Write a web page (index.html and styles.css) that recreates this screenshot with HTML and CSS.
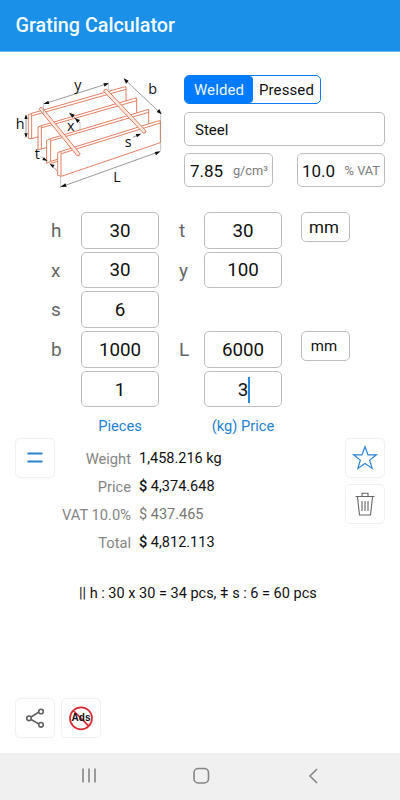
FILE: index.html
```
<!DOCTYPE html>
<html lang="en">
<head>
<meta charset="utf-8">
<meta name="viewport" content="width=device-width, initial-scale=1">
<title>Grating Calculator</title>
<link rel="stylesheet" href="styles.css">
</head>
<body>
<div class="app">
  <header class="bar">Grating Calculator</header>

  <section class="top">
    <svg class="diagram" viewBox="0 0 540 420">
      <g class="steel">
        <path d="M85 164l10-4L368 82l10-2v76L95 236l-10-1zM95 160v76M97 167L378 88"/>
        <path d="M114 201l10-4L400 116l10-2v74L124 267l-10 2zM124 197v70M126 203L410 122"/>
        <path d="M140 241l12-5L436 151l10-3v70L152 304l-12 6zM152 236v69M154 242L446 157M150 310l23-6"/>
        <path d="M173 278l10-4L470 184l11-2v66L184 349l-11-3zM183 274v74M184 281L481 189"/>
        <path class="rod" d="M118 148q1-8 9-5L240 281q-1 9-9 6z"/>
        <path class="rod" d="M311 94q1-8 9-6L438 213q0 8-8 6z"/>
      </g>
      <g class="dims">
        <path d="M78 167v63M134 131L323 71M374 58L482 160M185 380L478 275M211 161L240 189M398 232l22-9M122 290l20 12M149 312l22 20"/>
        <path class="guide" d="M130 130v35M325 72v18M482 160v112M182 350v34M240 187v25"/>
      </g>
      <g class="heads">
        <path d="M78 163l-5 14h10zM78 234l-5-14h10zM130 132l15-10 3 10zM327 69l-17 1 4 10zM371 55l15 7-8 9zM485 163l-15-7 8-9zM181 381l15-11 4 10zM482 274l-18 2 4 10zM207 158l17 6-7 9zM224 174l16 6-8 9zM424 221l-17 1 4 10zM142 303l-15-3 5-8zM149 311l15 4-6 8z"/>
      </g>
      <g class="names">
        <text x="223" y="91">y</text><text x="445" y="102">b</text>
        <text x="47" y="208">h</text><text x="201" y="213">x</text>
        <text x="374" y="260">s</text><text x="104" y="298">t</text>
        <text x="340" y="366">L</text>
      </g>
    </svg>
    <div class="setup">
      <div class="segments"><span class="on">Welded</span><span class="off">Pressed</span></div>
      <div class="box material">Steel</div>
      <div class="pair">
        <div class="box"><b>7.85</b><small>g/cm³</small></div>
        <div class="box vat"><b>10.0</b><small>% VAT</small></div>
      </div>
    </div>
  </section>

  <section class="fields">
    <label>h</label><div class="box">30</div><label class="second">t</label><div class="box">30</div><div class="box unit">mm</div>
    <label>x</label><div class="box">30</div><label class="second">y</label><div class="box">100</div><i></i>
    <label>s</label><div class="box">6</div><i></i><i></i><i></i>
    <label>b</label><div class="box">1000</div><label class="second">L</label><div class="box">6000</div><div class="box unit small">mm</div>
    <i></i><div class="box">1</div><i></i><div class="box">3<span class="caret"></span></div><i></i>
    <i></i><div class="caption">Pieces</div><i></i><div class="caption">(kg) Price</div><i></i>
  </section>

  <section class="results">
    <div class="tile"><svg viewBox="0 0 40 40"><path class="blue thick" d="M12.500 15.500h15M12.500 23.500h15"/></svg></div>
    <dl>
      <dt>Weight</dt><dd>1,458.216 kg</dd>
      <dt>Price</dt><dd><em>$</em> 4,374.648</dd>
      <dt>VAT 10.0%</dt><dd class="muted">$ 437.465</dd>
      <dt>Total</dt><dd><em>$</em> 4,812.113</dd>
    </dl>
    <div class="side">
      <div class="tile"><svg viewBox="0 0 40 40"><path class="blue" d="M20 8.800l3 8h8.400l-6.700 5.300 2.400 8.300L20 25.500l-7.100 4.900 2.400-8.300-6.700-5.300H17z"/></svg></div>
      <div class="tile"><svg viewBox="0 0 40 40"><path class="gray" d="M10.500 12.500h19M12.500 13l2 18h11l2-18M17 12V9.300h6V12M17 17v10M20 17v10M23 17v10"/></svg></div>
    </div>
  </section>

  <p class="summary">|| h : 30 x 30 = 34 pcs, ǂ s : 6 = 60 pcs</p>

  <section class="actions">
    <div class="tile"><svg viewBox="0 0 40 40"><path class="share" d="M16 19l8-5M16 21.500l8 4.500"/><g class="share"><circle cx="14" cy="20.300" r="2.300"/><circle cx="26" cy="13.500" r="2.300"/><circle cx="26" cy="26.800" r="2.300"/></g></svg></div>
    <div class="tile"><svg viewBox="0 0 40 40"><circle class="ban" cx="20" cy="20.300" r="11"/><path class="ban" d="M12.200 12.500l15.600 15.600"/><text class="ads" x="20" y="23">Ads</text></svg></div>
  </section>

  <nav class="nav">
    <svg viewBox="0 0 400 47"><path d="M83 15.500v14M89 15.500v14M95 15.500v14M317 16l-7 7 7 7"/><rect x="194" y="15.500" width="14.500" height="14.500" rx="4.200"/></svg>
  </nav>
</div>
</body>
</html>
```
FILE: styles.css
```
* { box-sizing: border-box; }
body { margin: 0; background: #fff; color: #111; font-family: Roboto, "Liberation Sans", sans-serif; }
.app { width: 400px; height: 800px; display: flex; flex-direction: column; overflow: hidden; }
svg { display: block; }

.bar { height: 52px; flex: none; padding-left: 15.500px; background: #1b90e8; border-bottom: 1px solid #71b9ef; color: #f2faff; font-size: 19.75px; font-weight: 500; line-height: 51px; }

.top { display: flex; height: 160px; flex: none; padding-top: 8px; }
.diagram { width: 180px; height: 140px; flex: none; }
.steel path { fill: #fff; stroke: #df7557; stroke-width: 2.8; stroke-linejoin: round; }
.steel .rod { fill: #fce8df; }
.dims path { fill: none; stroke: #555; stroke-width: 1.8; }
.dims .guide { stroke: #888; stroke-width: 1.5; }
.heads path { fill: #111; }
.names text { font-family: "Open Sans", "Noto Sans", sans-serif; font-size: 43px; fill: #111; }

.box { display: flex; align-items: center; justify-content: center; border: 1px solid #bdbdbd; border-radius: 5px; background: #fff; }
.setup { width: 201px; margin: 15px 0 0 4px; }
.segments { display: flex; width: 137px; height: 29px; border: 1px solid #0a7cf0; border-radius: 5px; overflow: hidden; font-size: 15px; line-height: 28px; text-align: center; letter-spacing: .1px; }
.segments .on { width: 68px; background: #007aff; color: #eaf6ff; border-radius: 0 4px 4px 0; }
.segments .off { flex: 1; }
.material { height: 34px; margin-top: 8px; padding-left: 10px; justify-content: flex-start; font-size: 15px; padding-top: 1px; }
.pair { display: flex; justify-content: space-between; margin-top: 7px; }
.pair .box { width: 89px; height: 34px; justify-content: space-between; padding: 1px 4px 0 5px; }
.pair .vat { width: 88px; padding-left: 4px; }
.pair b { font-weight: 400; font-size: 17px; }
.pair small { font-size: 12.8px; color: #7c7c7c; }

.fields { display: grid; grid-template-columns: 30px 78px 45px 78px 68px; grid-template-rows: repeat(5, 39.7px) 27px; padding-left: 51px; flex: none; }
.fields .box { height: 36.500px; font-size: 18.8px; padding-top: 1px; }
.fields label { font-size: 19px; line-height: 38px; color: #666; }
.fields .second { padding-left: 20px; }
.fields .unit { width: 49px; height: 30px; margin-left: 19px; padding-right: 3px; padding-bottom: 1px; font-size: 17px; }
.fields .small { font-size: 15px; }
.caret { width: 2px; height: 26px; margin-right: -2px; background: #2787d9; }
.caption { color: #2581d2; font-size: 14.7px; line-height: 32px; text-align: center; }

.tile { width: 40px; height: 40px; flex: none; border: 1px solid #f1f1f1; border-radius: 5px; }
.tile svg { width: 40px; height: 40px; margin: -1px; fill: none; }
.blue { stroke: #2884d4; stroke-width: 1.2; }
.thick { stroke-width: 1.9; }
.gray { stroke: #666; stroke-width: 1.1; }
.share { stroke: #626262; stroke-width: 1.6; }
.ban { stroke: #d62932; stroke-width: 1.7; }
.ads { fill: #111; font: 700 10px "Liberation Sans", sans-serif; text-anchor: middle; }

.results { display: flex; justify-content: space-between; height: 139px; flex: none; padding: 1px 15px 0; }
.results dl { display: grid; grid-template-columns: 76px 190px; column-gap: 8px; grid-auto-rows: 27.8px; width: 290px; margin: 7px 0 0; font-size: 14.5px; line-height: 28px; }
.results dt { color: #858585; text-align: right; white-space: nowrap; font-size: 14.7px; }
.results dd { margin: 0; }
.results em { font-style: normal; font-weight: 500; }
.results .muted { color: #777; }
.side { display: flex; flex-direction: column; gap: 6px; }
.summary { margin: 3px 0 0; height: 30px; padding-left: 79px; font-size: 14.5px; line-height: 30px; white-space: nowrap; }
.actions { display: flex; gap: 6px; margin: auto 0 15px 15px; }
.nav { height: 47px; flex: none; background: #f0f0f0; }
.nav svg { width: 400px; height: 47px; fill: none; stroke: #858585; stroke-width: 1.6; }
```
